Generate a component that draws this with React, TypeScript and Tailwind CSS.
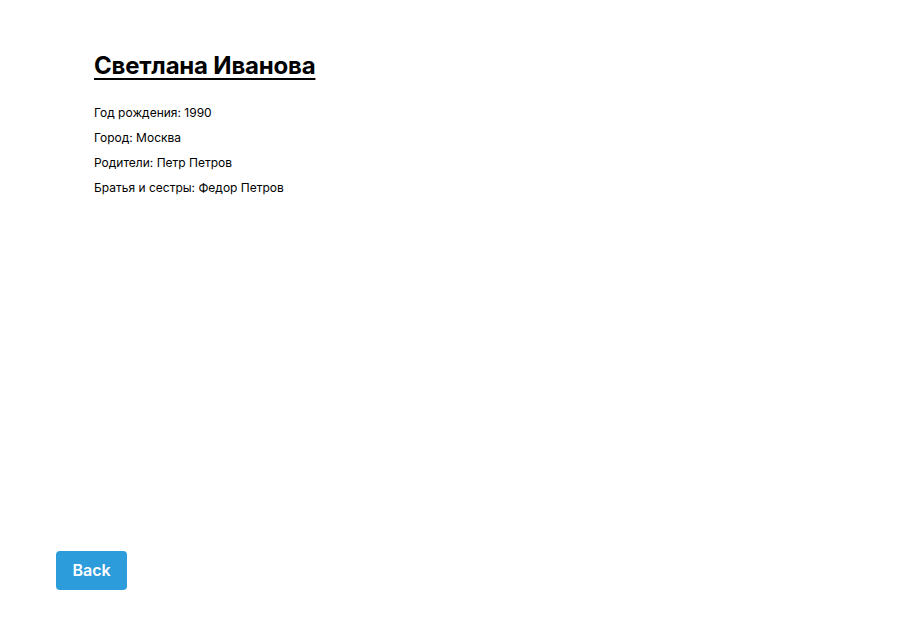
export default function App() {
  const rows = [
    "Год рождения: 1990",
    "Город: Москва",
    "Родители: Петр Петров",
    "Братья и сестры: Федор Петров",
  ];

  return (
    <div className="flex h-screen flex-col justify-between bg-white font-['Inter',sans-serif] text-black">
      <div className="pl-[94px] pt-[50px]">
        <h1 className="text-2xl leading-8 font-bold tracking-[-0.2px] underline underline-offset-4 decoration-2">
          Светлана Иванова
        </h1>
        <ul className="mt-[18px]">
          {rows.map((row) => (
            <li key={row} className="text-xs leading-[25px]">
              {row}
            </li>
          ))}
        </ul>
      </div>
      <div className="pb-[29px] pl-[56px]">
        <button className="h-[39px] w-[71px] rounded bg-[#2d9cdb] pb-[2px] text-base font-semibold text-white">
          Back
        </button>
      </div>
    </div>
  );
}
